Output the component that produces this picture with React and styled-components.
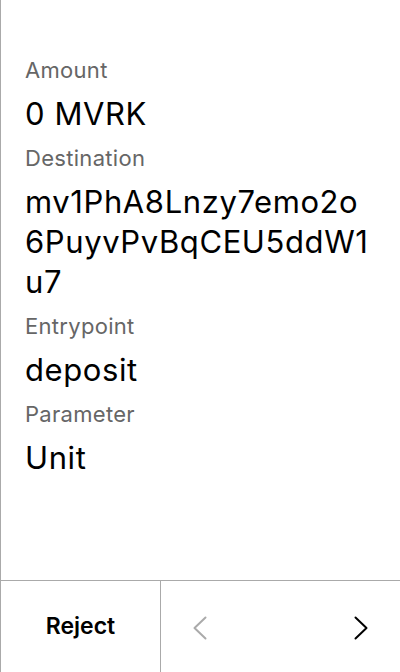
import React from 'react';
import styled, { createGlobalStyle } from 'styled-components';

const GlobalStyle = createGlobalStyle`
    html, body {
        margin: 0;
        padding: 0;
        background: #fff;
    }
    body {
        font-family: Inter, 'Noto Sans', sans-serif;
    }
`

const fields = [
    { label: 'Amount', value: '0 MVRK' },
    { label: 'Destination', value: 'mv1PhA8Lnzy7emo2o6PuyvPvBqCEU5ddW1u7' },
    { label: 'Entrypoint', value: 'deposit' },
    { label: 'Parameter', value: 'Unit' },
];

const Chevron = ({ dir, color }) => (
    <svg width="14" height="24" viewBox="0 0 14 24" fill="none">
        <polyline
            points={dir === 'left' ? '12.5,1.5 1.5,12 12.5,22.5' : '1.5,1.5 12.5,12 1.5,22.5'}
            stroke={color}
            strokeWidth="2"
            strokeLinecap="round"
            strokeLinejoin="round"
        />
    </svg>
);

const App = () => {
    return (
        <Screen>
            <GlobalStyle />
            <Content>
                {fields.map((f) => (
                    <Field key={f.label}>
                        <Label>{f.label}</Label>
                        <Value>{f.value}</Value>
                    </Field>
                ))}
            </Content>
            <Footer>
                <RejectButton>Reject</RejectButton>
                <Nav>
                    <NavButton><Chevron dir="left" color="#aaaaaa" /></NavButton>
                    <NavButton><Chevron dir="right" color="#000000" /></NavButton>
                </Nav>
            </Footer>
        </Screen>
    )
};

export default App;

const Screen = styled.div`
    width: 400px;
    height: 672px;
    box-sizing: border-box;
    border-left: 1px solid #aaaaaa;
    display: flex;
    flex-direction: column;
    background: #fff;
`

const Content = styled.div`
    flex: 1;
    padding: 56px 24px 0 24px;
    display: flex;
    flex-direction: column;
    gap: 10px;
`

const Field = styled.div`
    display: flex;
    flex-direction: column;
    gap: 10px;
`

const Label = styled.div`
    font-size: 22px;
    line-height: 28px;
    letter-spacing: 0.3px;
    color: #666666;
`

const Value = styled.div`
    font-size: 31px;
    line-height: 40px;
    letter-spacing: 0.6px;
    color: #000;
    word-break: break-all;
`

const Footer = styled.div`
    height: 92px;
    box-sizing: border-box;
    border-top: 1px solid #aaaaaa;
    display: flex;
`

const RejectButton = styled.div`
    width: 159px;
    border-right: 1px solid #aaaaaa;
    display: flex;
    align-items: center;
    justify-content: center;
    font-size: 23px;
    font-weight: 600;
    color: #000;
    padding-bottom: 2px;
`

const Nav = styled.div`
    flex: 1;
    display: flex;
    align-items: center;
    justify-content: space-between;
    padding: 0 32px;
`

const NavButton = styled.div`
    display: flex;
    align-items: center;
    justify-content: center;
    padding-top: 2px;
`
